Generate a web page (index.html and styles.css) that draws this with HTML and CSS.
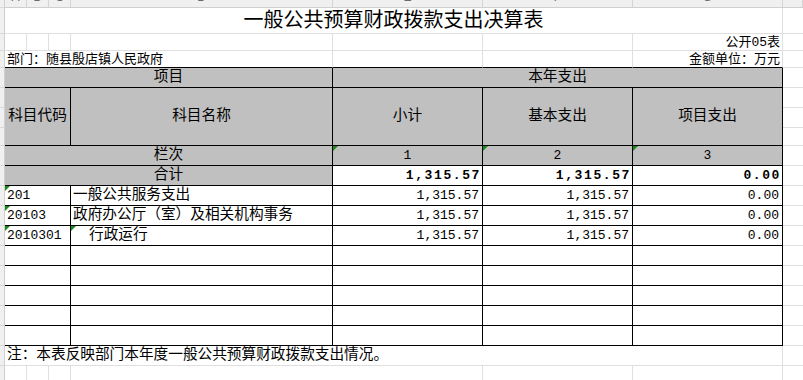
FILE: index.html
```html
<!DOCTYPE html>
<html lang="zh-CN">
<head>
<meta charset="utf-8">
<title>一般公共预算财政拨款支出决算表</title>
<link rel="stylesheet" href="styles.css">
</head>
<body>
<div class="sheet">
  <!-- column header strip -->
  <div class="corner"></div>
  <div class="ch"><span>A</span></div>
  <div class="ch"><span>B</span></div>
  <div class="ch"><span>C</span></div>
  <div class="ch"><span>D</span></div>
  <div class="ch"><span>E</span></div>
  <div class="ch"><span>F</span></div>
  <div class="ch"><span>G</span></div>
  <div class="ch"></div>

  <!-- title -->
  <div class="rh"></div>
  <div class="s7 title">一般公共预算财政拨款支出决算表</div>
  <div class="gut"></div>

  <!-- 公开05表 -->
  <div class="rh"></div>
  <div></div><div></div><div></div><div></div><div></div><div></div>
  <div class="small right">公开05表</div>
  <div class="gut"></div>

  <!-- 部门 / 金额单位 -->
  <div class="rh"></div>
  <div class="s4 small left bb">部门：随县殷店镇人民政府</div>
  <div class="bb"></div>
  <div class="bb"></div>
  <div class="small right bb">金额单位：万元</div>
  <div class="gut"></div>

  <!-- header row 1 -->
  <div class="rh"></div>
  <div class="k g s4 cn center">项目</div>
  <div class="k g s3 cn center">本年支出</div>
  <div class="gut"></div>

  <!-- header row 2 (three sheet rows tall) -->
  <div class="rh"></div>
  <div class="k g s3 r3 cn center">科目代码</div>
  <div class="k g r3 cn center">科目名称</div>
  <div class="k g r3 cn center">小计</div>
  <div class="k g r3 cn center">基本支出</div>
  <div class="k g r3 cn center">项目支出</div>
  <div class="gut"></div>
  <div class="rh"></div>
  <div class="gut"></div>
  <div class="rh"></div>
  <div class="gut"></div>

  <!-- 栏次 -->
  <div class="rh"></div>
  <div class="k g s4 cn center">栏次</div>
  <div class="k g nc center"><span class="tri"></span>1</div>
  <div class="k g nc center"><span class="tri"></span>2</div>
  <div class="k g nc center"><span class="tri"></span>3</div>
  <div class="gut"></div>

  <!-- 合计 -->
  <div class="rh"></div>
  <div class="k g s4 cn center">合计</div>
  <div class="k num tot">1,315.57</div>
  <div class="k num tot">1,315.57</div>
  <div class="k num tot">0.00</div>
  <div class="gut"></div>

  <!-- data -->
  <div class="rh"></div>
  <div class="k s3 code"><span class="tri"></span>201</div>
  <div class="k cn name">一般公共服务支出</div>
  <div class="k num">1,315.57</div>
  <div class="k num">1,315.57</div>
  <div class="k num">0.00</div>
  <div class="gut"></div>

  <div class="rh"></div>
  <div class="k s3 code"><span class="tri"></span>20103</div>
  <div class="k cn name">政府办公厅（室）及相关机构事务</div>
  <div class="k num">1,315.57</div>
  <div class="k num">1,315.57</div>
  <div class="k num">0.00</div>
  <div class="gut"></div>

  <div class="rh"></div>
  <div class="k s3 code"><span class="tri"></span>2010301</div>
  <div class="k cn name indent"><span class="tri"></span>行政运行</div>
  <div class="k num">1,315.57</div>
  <div class="k num">1,315.57</div>
  <div class="k num">0.00</div>
  <div class="gut"></div>

  <!-- empty rows -->
  <div class="rh"></div><div class="k s3"></div><div class="k"></div><div class="k"></div><div class="k"></div><div class="k"></div><div class="gut"></div>
  <div class="rh"></div><div class="k s3"></div><div class="k"></div><div class="k"></div><div class="k"></div><div class="k"></div><div class="gut"></div>
  <div class="rh"></div><div class="k s3"></div><div class="k"></div><div class="k"></div><div class="k"></div><div class="k"></div><div class="gut"></div>
  <div class="rh"></div><div class="k s3"></div><div class="k"></div><div class="k"></div><div class="k"></div><div class="k"></div><div class="gut"></div>
  <div class="rh"></div><div class="k s3"></div><div class="k"></div><div class="k"></div><div class="k"></div><div class="k"></div><div class="gut"></div>

  <!-- note -->
  <div class="rh"></div>
  <div class="s7 cn left">注：本表反映部门本年度一般公共预算财政拨款支出情况。</div>
  <div class="gut"></div>

  <!-- trailing row -->
  <div class="rh"></div>
  <div></div><div></div><div></div>
  <div class="s2"></div>
  <div></div><div></div>
  <div class="gut"></div>
</div>
</body>
</html>
```

FILE: styles.css
```css
html, body {
  margin: 0;
  padding: 0;
  background: #ffffff;
  overflow: hidden;
}

body {
  font-family: "Liberation Mono", "Noto Sans CJK SC", monospace;
  color: #000000;
}

.sheet {
  display: grid;
  grid-template-columns: 5px 22px 22px 22px 262px 150px 150px 150px 1fr;
  grid-template-rows: 8px 26px 17px 17px 20px 20px 20px 18px repeat(12, 20px);
  width: 803px;
  height: 380px;
  overflow: hidden;
}

.sheet > div {
  box-sizing: border-box;
  border-right: 1px solid #dfdfdf;
  border-bottom: 1px solid #dfdfdf;
  display: flex;
  align-items: center;
  min-width: 0;
  white-space: nowrap;
  position: relative;
  line-height: 1;
}

.sheet > .corner,
.sheet > .rh {
  background: #f0f0f0;
  border-right-color: #cfcfcf;
  border-bottom-color: #d9d9d9;
}

.sheet > .ch {
  background: #f0f0f0;
  border-right-color: #d4d4d4;
  border-bottom-color: #cfcfcf;
  justify-content: center;
  align-items: flex-start;
  overflow: hidden;
  font-family: "Liberation Sans", sans-serif;
  font-size: 12px;
  color: #6a6a6a;
}

.ch span {
  line-height: 12px;
  margin-top: -9px;
}

.sheet > .gut {
  border-right: 0;
}

.sheet > .k {
  border-right-color: #000000;
  border-bottom-color: #000000;
}

.sheet > .bb {
  border-bottom-color: #000000;
}

.g {
  background: #c0c0c0;
}

.s2 { grid-column: span 2; }
.s3 { grid-column: span 3; }
.s4 { grid-column: span 4; }
.s7 { grid-column: span 7; }
.r3 { grid-row: span 3; }

.center { justify-content: center; }
.right { justify-content: flex-end; padding-right: 2px; }
.left { padding-left: 2px; }

.title {
  justify-content: center;
  font-size: 20px;
  padding-top: 3px;
}

.small {
  font-size: 13px;
}

.cn {
  font-size: 14.67px;
}

.nc {
  font-size: 13px;
}

.name {
  padding-left: 2px;
}

.indent {
  padding-left: 18px;
}

.code {
  font-size: 13px;
  padding-left: 2px;
}

.num {
  font-size: 13px;
  justify-content: flex-end;
  padding-right: 3px;
}

.tot {
  font-weight: bold;
  letter-spacing: 1.6px;
  padding-right: 1px;
}

.tri {
  position: absolute;
  top: 0;
  left: 0;
  width: 0;
  height: 0;
  border-top: 5px solid #1b8a1b;
  border-right: 5px solid transparent;
}
```
